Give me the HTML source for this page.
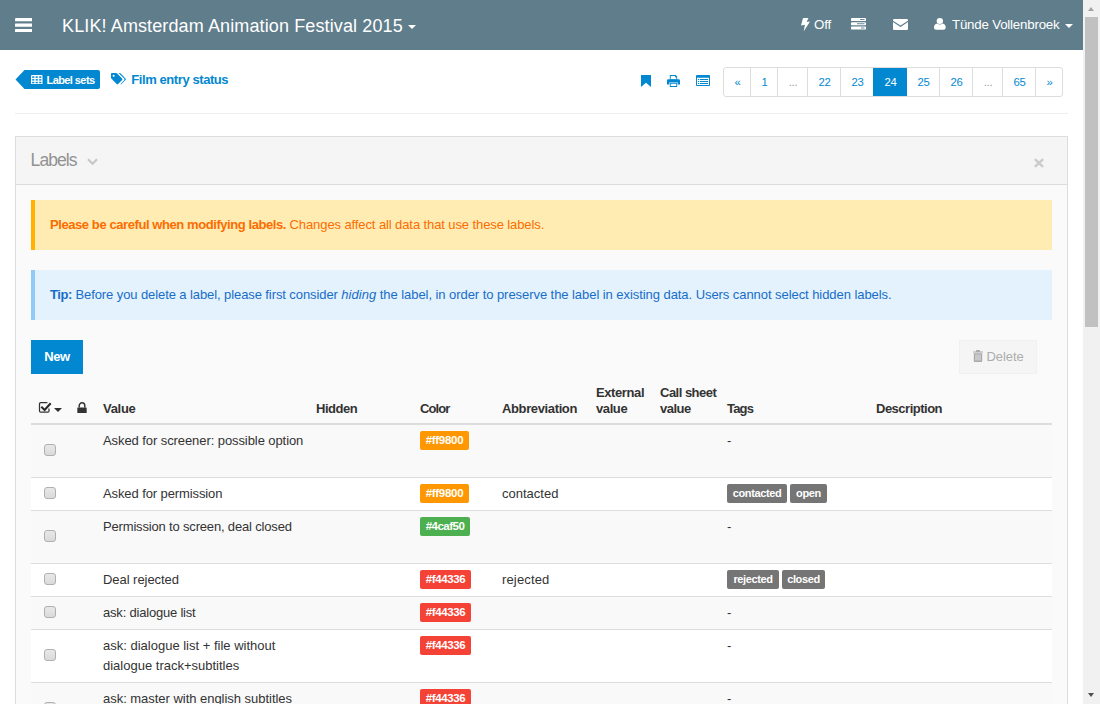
<!DOCTYPE html>
<html lang="en">
<head>
<meta charset="utf-8">
<title>Film entry status - Labels</title>
<style>
html,body{margin:0;padding:0;}
body{width:1100px;height:704px;overflow:hidden;position:relative;background:#fff;
  font-family:"Liberation Sans",sans-serif;font-size:13px;color:#333;line-height:20px;}
*{box-sizing:border-box;}
.abs{position:absolute;white-space:nowrap;}
svg{display:block;}

/* navbar */
#nav{position:absolute;left:0;top:0;width:1083px;height:50px;background:#607d8b;color:#fff;}
#nav .abs{color:#fff;}
#title{left:62px;top:14px;font-size:18px;line-height:24px;letter-spacing:0.12px;}
.caret{position:absolute;width:0;height:0;border-left:4px solid transparent;border-right:4px solid transparent;border-top:4px solid #fff;}

/* scrollbar */
#sb{position:absolute;left:1083px;top:0;width:17px;height:704px;background:#f1f1f1;}
#sb .thumb{position:absolute;left:2px;top:17px;width:13px;height:310px;background:#c1c1c1;}
#sb .au{position:absolute;left:5px;top:7px;width:0;height:0;border-left:3.5px solid transparent;border-right:3.5px solid transparent;border-bottom:4px solid #a3a3a3;}
#sb .ad{position:absolute;left:5px;top:693px;width:0;height:0;border-left:3.5px solid transparent;border-right:3.5px solid transparent;border-top:4px solid #505050;}

/* breadcrumb */
#lsets{left:15px;top:70px;height:19px;width:85px;}
#lsets .txt{position:absolute;left:31.5px;top:0.5px;line-height:19.5px;font-size:11px;font-weight:bold;color:#fff;letter-spacing:-0.58px;}
#crumb{left:131.3px;top:70px;font-weight:bold;color:#0288d1;font-size:13px;line-height:20px;letter-spacing:-0.42px;}

/* pagination */
#pag{position:absolute;left:723px;top:67px;height:30px;width:340px;border:1px solid #ddd;border-radius:3px;background:#fff;overflow:hidden;}
#pag span{position:absolute;top:-1px;height:30px;line-height:30px;text-align:center;color:#0288d1;font-size:11.3px;letter-spacing:-0.3px;border-left:1px solid #ddd;}
#pag span.first{border-left:none;}
#pag span.act{background:#0288d1;color:#fff;border-color:#0288d1;}

#hr{position:absolute;left:15px;top:113px;width:1053px;height:1px;background:#eee;}

/* panel */
#panel{position:absolute;left:15px;top:136px;width:1053px;height:600px;border:1px solid #ddd;background:#fafafa;}
#phead{position:absolute;left:0;top:0;width:1051px;height:48px;background:#f5f5f5;border-bottom:1px solid #ddd;}
#ptitle{left:14.6px;top:13px;font-size:17.5px;color:#929292;line-height:20px;letter-spacing:-0.95px;}

.alert{position:absolute;left:31px;width:1021px;height:50px;border-left:4px solid;}
.alert .t{position:absolute;left:15px;top:15px;line-height:20px;white-space:nowrap;font-size:13px;letter-spacing:-0.1px;}
.alert b{letter-spacing:-0.42px;}
#warn{top:200px;background:#ffecb3;border-color:#ffb300;color:#fb6d00;}
#info{top:270px;background:#e3f2fd;border-color:#90caf9;color:#186dc9;}

#new{left:31px;top:340px;width:52px;height:34px;background:#0288d1;color:#fff;font-weight:bold;text-align:center;line-height:33px;font-size:13px;letter-spacing:-0.45px;}
#del{left:959px;top:340px;width:78px;height:34px;background:#f5f5f5;border:1px solid #f0f0f0;color:#adadad;line-height:32px;font-size:13px;}

/* table */
#tbl{position:absolute;left:31px;top:380px;width:1021px;}
.th{position:absolute;font-weight:bold;color:#333;line-height:16.5px;font-size:13px;letter-spacing:-0.45px;white-space:nowrap;}
.row{position:absolute;left:31px;width:1021px;border-top:1px solid #ddd;}
.row.g{background:#f9f9f9;}
.row.w{background:#fff;}
.row .c{position:absolute;white-space:nowrap;line-height:20px;letter-spacing:-0.1px;}
.cb{position:absolute;left:13px;width:12px;height:12px;border:1px solid #b0b0b0;border-radius:3px;background:linear-gradient(#e8e8e8,#dadada);}
.lbl{position:absolute;left:389px;height:19px;width:49px;text-align:center;border-radius:2px;color:#fff;font-weight:bold;font-size:11.5px;line-height:19px;letter-spacing:-0.3px;white-space:nowrap;}
.tag{position:absolute;height:19px;text-align:center;border-radius:2px;color:#fff;font-weight:bold;font-size:11px;line-height:19px;padding:0;background:#757575;letter-spacing:-0.38px;white-space:nowrap;}
</style>
</head>
<body>

<div id="nav">
  <svg class="abs" style="left:14.8px;top:17.5px" width="17.6" height="14.4" viewBox="0 0 17.6 14.4"><rect x="0" y="0" width="17.6" height="3.2" rx="0.5" fill="#fff"/><rect x="0" y="5.55" width="17.6" height="3.2" rx="0.5" fill="#fff"/><rect x="0" y="11.1" width="17.6" height="3.2" rx="0.5" fill="#fff"/></svg>
  <div id="title" class="abs">KLIK! Amsterdam Animation Festival 2015</div>
  <div class="caret" style="left:408px;top:25px"></div>

  <svg class="abs" style="left:800.5px;top:18px" width="9" height="13.4" preserveAspectRatio="none" viewBox="0 0 8 15"><path d="M1.8 0 L6.6 0 L5 4.4 L8 3.9 L2.4 15 L3.5 7.6 L0 8.3 Z" fill="#fff"/></svg>
  <div class="abs" id="off" style="left:814px;top:14.5px;font-size:13.3px;line-height:20px;letter-spacing:-0.1px">Off</div>
  <svg class="abs" style="left:851px;top:18px" width="15" height="11.5" preserveAspectRatio="none" viewBox="0 0 15 13"><g fill="#fff"><rect x="0" y="0" width="15" height="3.4" rx="0.5"/><rect x="0" y="4.8" width="15" height="3.4" rx="0.5"/><rect x="0" y="9.6" width="15" height="3.4" rx="0.5"/></g><g fill="#607d8b"><rect x="9" y="1.2" width="4.5" height="1"/><rect x="6" y="6" width="7.5" height="1"/><rect x="10" y="10.8" width="3.5" height="1"/></g></svg>
  <svg class="abs" style="left:892.5px;top:19px" width="15" height="11" preserveAspectRatio="none" viewBox="0 0 15 12"><path d="M0 1.2 Q0 0 1.2 0 L13.8 0 Q15 0 15 1.2 L15 1.8 L7.5 7 L0 1.8 Z" fill="#fff"/><path d="M0 3.4 L7.5 8.6 L15 3.4 L15 10.8 Q15 12 13.8 12 L1.2 12 Q0 12 0 10.8 Z" fill="#fff"/></svg>
  <svg class="abs" style="left:934.3px;top:18px" width="11.7" height="11.8" viewBox="0 0 11 12" preserveAspectRatio="none"><circle cx="5.5" cy="3" r="3" fill="#fff"/><path d="M0 10 Q0 6 3 5.6 Q5.5 7.4 8 5.6 Q11 6 11 10 Q11 12 9 12 L2 12 Q0 12 0 10 Z" fill="#fff"/></svg>
  <div class="abs" id="user" style="left:952px;top:14.5px;font-size:13.3px;line-height:20px;letter-spacing:-0.2px">Tünde Vollenbroek</div>
  <div class="caret" style="left:1065px;top:24px"></div>
</div>

<div id="sb"><div class="au"></div><div class="thumb"></div><div class="ad"></div></div>

<!-- breadcrumb -->
<div id="lsets" class="abs">
  <svg class="abs" style="left:0;top:0" width="85" height="19" viewBox="0 0 85 19"><path d="M0.5 9.5 L9.5 0 L83 0 Q85 0 85 2 L85 17 Q85 19 83 19 L9.5 19 Z" fill="#0288d1"/></svg>
  <svg class="abs" style="left:16.2px;top:4.5px" width="11.5" height="9.6" viewBox="0 0 12 10" preserveAspectRatio="none"><rect x="0" y="0" width="12" height="10" rx="1" fill="#fff"/><g fill="#0288d1"><rect x="1.2" y="1.4" width="2.3" height="1.6"/><rect x="4.85" y="1.4" width="2.3" height="1.6"/><rect x="8.5" y="1.4" width="2.3" height="1.6"/><rect x="1.2" y="4.3" width="2.3" height="1.5"/><rect x="4.85" y="4.3" width="2.3" height="1.5"/><rect x="8.5" y="4.3" width="2.3" height="1.5"/><rect x="1.2" y="7.1" width="2.3" height="1.5"/><rect x="4.85" y="7.1" width="2.3" height="1.5"/><rect x="8.5" y="7.1" width="2.3" height="1.5"/></g></svg>
  <span class="txt">Label sets</span>
</div>
<svg class="abs" style="left:111px;top:73.2px" width="15" height="13.2" preserveAspectRatio="none" viewBox="0 0 16 14"><path d="M0 0.8 Q0 0 0.8 0 L5.2 0 Q6 0 6.6 0.6 L11.8 5.8 Q12.6 6.6 11.8 7.4 L7.6 11.6 Q6.8 12.4 6 11.6 L0.6 6.2 Q0 5.6 0 4.8 Z M2.8 1.8 A1.1 1.1 0 1 0 2.81 1.8 Z" fill="#0288d1" fill-rule="evenodd"/><path d="M8 0 L9 0 Q9.8 0 10.4 0.6 L15.4 5.8 Q16.2 6.6 15.4 7.4 L11.2 11.6 Q10.6 12.2 10 12 L14 7.6 Q14.8 6.6 14 5.8 Z" fill="#0288d1"/></svg>
<div id="crumb" class="abs">Film entry status</div>

<!-- toolbar icons -->
<svg class="abs" style="left:641px;top:75px" width="10" height="12" viewBox="0 0 10 12"><path d="M0 0 L10 0 L10 12 L5 7.8 L0 12 Z" fill="#0288d1"/></svg>
<svg class="abs" style="left:667px;top:75px" width="13" height="12" viewBox="0 0 14 13" preserveAspectRatio="none"><path d="M3 0 L9.4 0 L11 1.6 L11 5 L3 5 Z M4 1 L4 4.4 L10 4.4 L10 2.4 L8.6 2.4 L8.6 1 Z" fill="#0288d1" fill-rule="evenodd"/><path d="M1.4 4.6 L12.6 4.6 Q14 4.6 14 6 L14 10.4 L11.6 10.4 L11.6 8 L2.4 8 L2.4 10.4 L0 10.4 L0 6 Q0 4.6 1.4 4.6 Z" fill="#0288d1"/><path d="M3 8.6 L11 8.6 L11 13 L3 13 Z M4 9.6 L4 12 L10 12 L10 9.6 Z" fill="#0288d1" fill-rule="evenodd"/></svg>
<svg class="abs" style="left:696px;top:75px" width="14" height="11" viewBox="0 0 14 11"><path d="M1 0 H13 Q14 0 14 1 V10 Q14 11 13 11 H1 Q0 11 0 10 V1 Q0 0 1 0 Z M1 2.7 V10 H13 V2.7 Z" fill="#0288d1" fill-rule="evenodd"/><g fill="#0288d1"><rect x="2" y="4" width="1.2" height="1"/><rect x="4" y="4" width="8" height="1"/><rect x="2" y="6" width="1.2" height="1"/><rect x="4" y="6" width="8" height="1"/><rect x="2" y="8" width="1.2" height="1"/><rect x="4" y="8" width="8" height="1"/></g></svg>

<div id="pag">
  <span class="first" style="left:0;width:27px">«</span>
  <span style="left:26px;width:28px">1</span>
  <span style="left:53px;width:31px;color:#999">...</span>
  <span style="left:83px;width:34px">22</span>
  <span style="left:116px;width:34px">23</span>
  <span class="act" style="left:149px;width:34px;z-index:2">24</span>
  <span style="left:182px;width:34px">25</span>
  <span style="left:215px;width:34px">26</span>
  <span style="left:248px;width:31px;color:#999">...</span>
  <span style="left:278px;width:34px">65</span>
  <span style="left:311px;width:28px">»</span>
</div>

<div id="hr"></div>

<div id="panel">
  <div id="phead">
    <div id="ptitle" class="abs">Labels</div>
    <svg class="abs" style="left:70.5px;top:20.5px" width="11" height="8" viewBox="0 0 11 8"><path d="M1 1.2 L5.5 5.8 L10 1.2" stroke="#c6c6c6" stroke-width="2.1" fill="none"/></svg>
    <svg class="abs" style="left:1018px;top:21px" width="10" height="10" viewBox="0 0 10 10"><path d="M0.9 1.2 L9.1 8.9 M9.1 1.2 L0.9 8.9" stroke="#cbcbcb" stroke-width="2.4" fill="none"/></svg>
  </div>
</div>

<div id="warn" class="alert"><div class="t"><b>Please be careful when modifying labels.</b> Changes affect all data that use these labels.</div></div>
<div id="info" class="alert"><div class="t"><b>Tip:</b> <span style="letter-spacing:-0.09px">Before you delete a label, please first consider</span> <i style="letter-spacing:0.05px">hiding</i> <span style="letter-spacing:-0.06px">the label, in order to preserve the label in existing data. Users cannot select hidden labels.</span></div></div>

<div id="new" class="abs">New</div>
<div id="del" class="abs">
  <svg class="abs" style="left:13px;top:9px" width="10" height="12" viewBox="0 0 10 12"><path d="M3.4 0 L6.6 0 L7.2 1.4 L10 1.4 L10 2.6 L0 2.6 L0 1.4 L2.8 1.4 Z" fill="#aaa"/><path d="M0.8 3.2 L9.2 3.2 L9.2 11 Q9.2 12 8.2 12 L1.8 12 Q0.8 12 0.8 11 Z M2.6 4.6 L2.6 10.4 L3.4 10.4 L3.4 4.6 Z M4.6 4.6 L4.6 10.4 L5.4 10.4 L5.4 4.6 Z M6.6 4.6 L6.6 10.4 L7.4 10.4 L7.4 4.6 Z" fill="#aaa" fill-rule="evenodd"/></svg>
  <span style="position:absolute;left:26.4px;top:0;letter-spacing:-0.06px">Delete</span>
</div>

<!-- table header -->
<svg class="abs" style="left:38px;top:401px" width="14" height="13" viewBox="0 0 14 13"><path d="M9.4 1.6 H2.7 Q1.5 1.6 1.5 2.8 V10 Q1.5 11.2 2.7 11.2 H9.8 Q11 11.2 11 10 V7.4" stroke="#333" stroke-width="1.25" fill="none"/><path d="M3.3 5.7 L6.6 8.9 L12.7 2.3" stroke="#2a2a2a" stroke-width="2.1" fill="none"/></svg>
<div class="caret" style="left:54.3px;top:407.8px;border-top-color:#2e2e2e;border-left-width:4.3px;border-right-width:4.3px;border-top-width:4.3px"></div>
<svg class="abs" style="left:77.1px;top:401.8px" width="10" height="11" viewBox="0 0 9.6 11" preserveAspectRatio="none"><rect x="0.3" y="5.4" width="9" height="5.6" rx="0.5" fill="#333"/><path d="M2.1 5.6 V3.7 A2.7 2.9 0 0 1 7.5 3.7 V5.6" stroke="#333" stroke-width="1.4" fill="none"/></svg>
<div class="th" style="left:103px;top:401px;letter-spacing:-0.3px">Value</div>
<div class="th" style="left:316px;top:401px;letter-spacing:-0.47px">Hidden</div>
<div class="th" style="left:420px;top:401px;letter-spacing:-0.88px">Color</div>
<div class="th" style="left:502px;top:401px;letter-spacing:-0.37px">Abbreviation</div>
<div class="th" style="left:596px;top:385px;line-height:16px;letter-spacing:-0.4px">External<br>value</div>
<div class="th" style="left:660px;top:385px;line-height:16px;letter-spacing:-0.51px">Call sheet<br>value</div>
<div class="th" style="left:727px;top:401px;letter-spacing:-0.8px">Tags</div>
<div class="th" style="left:876px;top:401px;letter-spacing:-0.5px">Description</div>
<div class="abs" style="left:31px;top:423px;width:1021px;height:2px;background:#ddd"></div>

<!-- rows -->
<div class="row g" style="top:425px;height:53px;border-top:none">
  <div class="cb" style="top:19px"></div>
  <div class="c" style="left:72px;top:6px;letter-spacing:-0.08px">Asked for screener: possible option</div>
  <div class="lbl" style="top:6px;background:#ff9800">#ff9800</div>
  <div class="c" style="left:696px;top:6px">-</div>
</div>
<div class="row w" style="top:477px;height:34px">
  <div class="cb" style="top:9px"></div>
  <div class="c" style="left:72px;top:6px">Asked for permission</div>
  <div class="lbl" style="top:6px;background:#ff9800">#ff9800</div>
  <div class="c" style="left:471px;top:6px;letter-spacing:0">contacted</div>
  <div class="tag" style="left:696px;top:6px;width:60px">contacted</div>
  <div class="tag" style="left:759px;top:6px;width:37px">open</div>
</div>
<div class="row g" style="top:510px;height:54px">
  <div class="cb" style="top:19px"></div>
  <div class="c" style="left:72px;top:6px;letter-spacing:-0.17px">Permission to screen, deal closed</div>
  <div class="lbl" style="top:6px;background:#4caf50;width:50px;letter-spacing:-0.5px">#4caf50</div>
  <div class="c" style="left:696px;top:6px">-</div>
</div>
<div class="row w" style="top:563px;height:34px">
  <div class="cb" style="top:9px"></div>
  <div class="c" style="left:72px;top:6px;letter-spacing:-0.05px">Deal rejected</div>
  <div class="lbl" style="top:6px;background:#f44336;width:51px;letter-spacing:-0.37px">#f44336</div>
  <div class="c" style="left:471px;top:6px;letter-spacing:0.15px">rejected</div>
  <div class="tag" style="left:696px;top:6px;width:52px">rejected</div>
  <div class="tag" style="left:751px;top:6px;width:43px">closed</div>
</div>
<div class="row g" style="top:596px;height:34px">
  <div class="cb" style="top:9px"></div>
  <div class="c" style="left:72px;top:6px;letter-spacing:-0.2px">ask: dialogue list</div>
  <div class="lbl" style="top:6px;background:#f44336;width:51px;letter-spacing:-0.37px">#f44336</div>
  <div class="c" style="left:696px;top:6px">-</div>
</div>
<div class="row w" style="top:629px;height:54px">
  <div class="cb" style="top:19px"></div>
  <div class="c" style="left:72px;top:6px;letter-spacing:0">ask: dialogue list + file without<br>dialogue track+subtitles</div>
  <div class="lbl" style="top:6px;background:#f44336;width:51px;letter-spacing:-0.37px">#f44336</div>
  <div class="c" style="left:696px;top:6px">-</div>
</div>
<div class="row g" style="top:682px;height:54px">
  <div class="cb" style="top:19px"></div>
  <div class="c" style="left:72px;top:6px;letter-spacing:-0.03px">ask: master with english subtitles</div>
  <div class="lbl" style="top:6px;background:#f44336;width:51px;letter-spacing:-0.37px">#f44336</div>
  <div class="c" style="left:696px;top:6px">-</div>
</div>

</body>
</html>
